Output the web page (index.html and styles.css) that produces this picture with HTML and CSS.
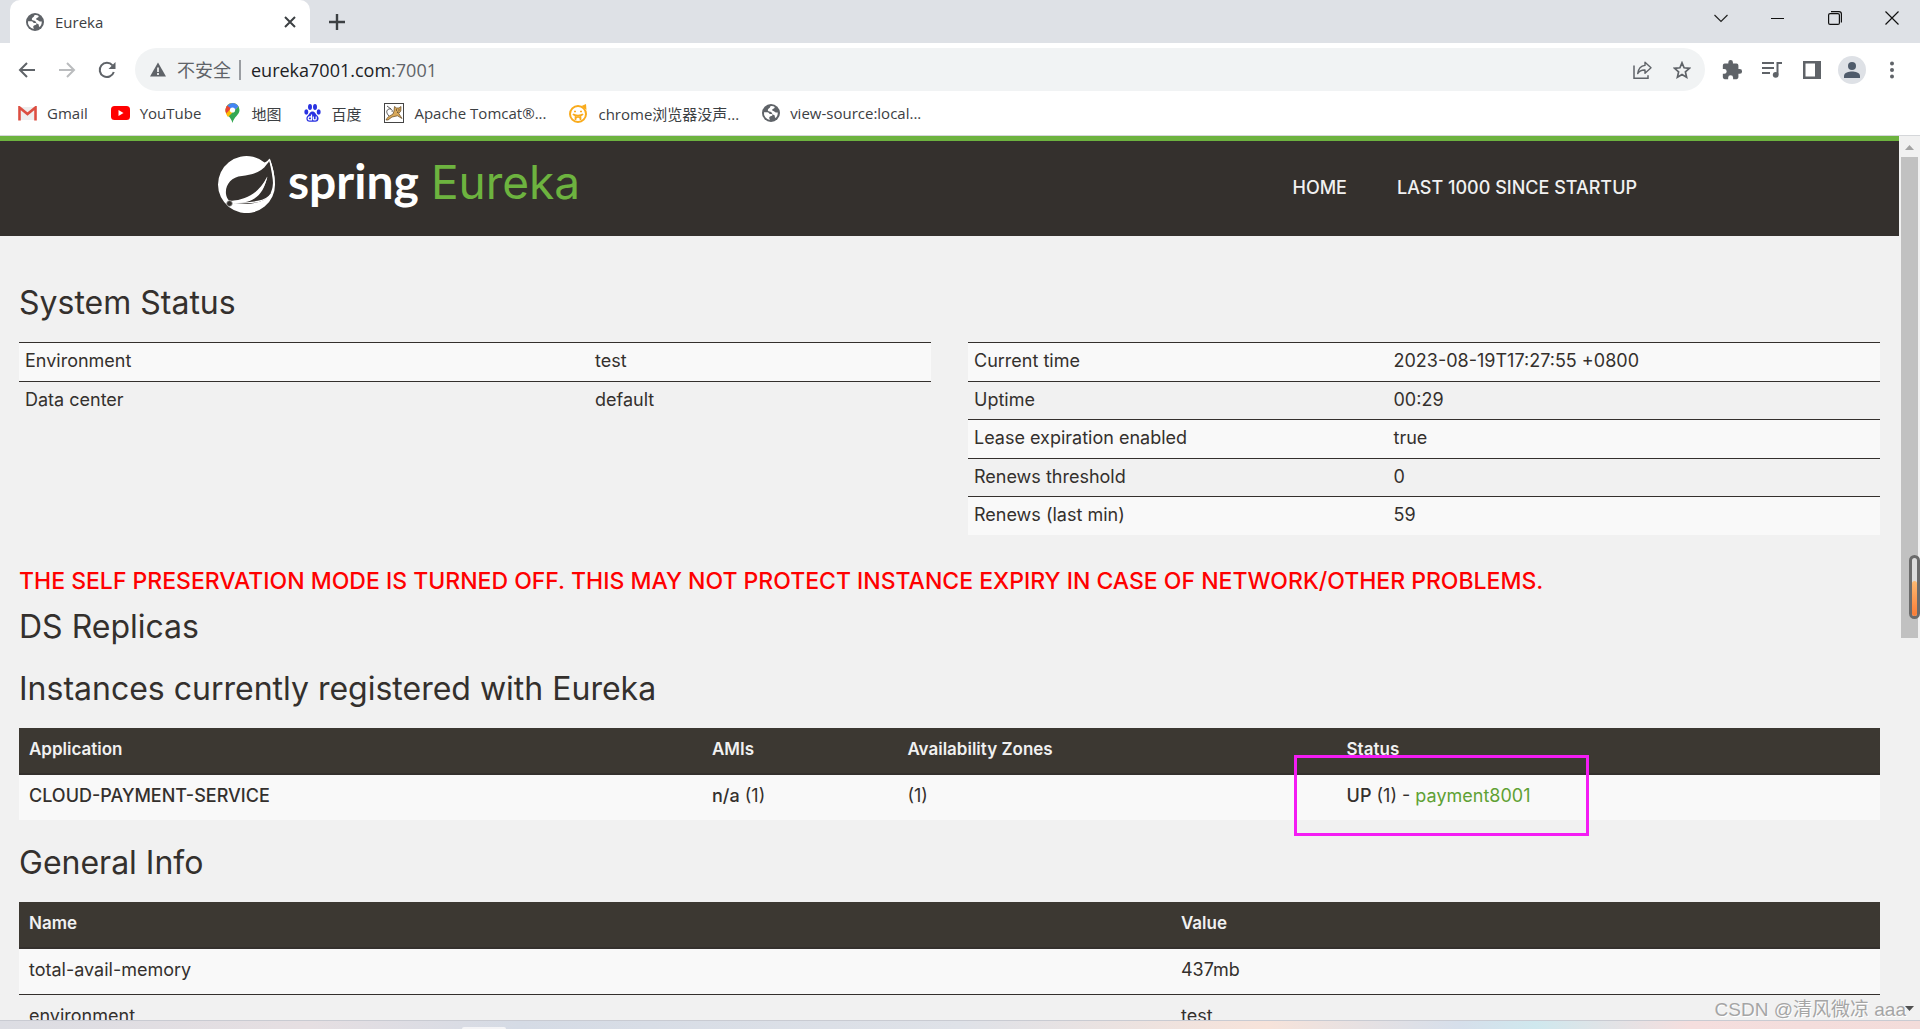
FILE: index.html
```html
<!DOCTYPE html>
<html lang="zh-CN">
<head>
<meta charset="utf-8">
<meta name="viewport" content="width=device-width, initial-scale=1">
<title>Eureka</title>
<link rel="stylesheet" href="styles.css">
</head>
<body>
<svg class="defs" aria-hidden="true">
  <symbol id="globe" viewBox="0 0 18 18">
    <circle cx="9" cy="9" r="9" fill="#5f6368"/>
    <path d="M2 8.200h3.600c1.200 0 1.300 1.700 2.600 1.700h1.400c1 0 1.200 1 .6 1.700-.8.900-2.700.8-2.900 1.700-.2.800.2 1.500.5 2.600A6.800 6.800 0 0 1 2 8.200zM8.400 2.200c1.900-.3 3.300.1 4.300.8-.1 1.500-1.200 1.500-2.200 2.300-.7.600-.2 1.600.7 1.600 1.200.1 1.600 1.500 2.800 1.500h1.800c.1 2.600-1 4.500-2.500 5.700-.7-1-.2-1.800-.8-2.800-.7-1-1.500-.5-2.100-1.400-.5-.9-1-1.700-2-2.100C7.100 7.200 5.700 7 5.800 5.900 5.900 4.600 8.300 4 8.400 2.200z" fill="#fff"/>
  </symbol>
</svg>

<header class="browser">
  <div class="tabstrip">
    <div class="tab">
      <svg class="favicon" width="18" height="18"><use href="#globe"/></svg>
      <span class="tab-title">Eureka</span>
      <button class="tab-close" aria-label="Close tab"><svg width="12" height="12" viewBox="0 0 12 12"><path d="M1 1l10 10M11 1L1 11" stroke="#3c4043" stroke-width="2"/></svg></button>
    </div>
    <button class="tab-new" aria-label="New tab"><svg width="16" height="16" viewBox="0 0 16 16"><path d="M8 0v16M0 8h16" stroke="#3c4043" stroke-width="2.400"/></svg></button>
    <div class="window-controls">
      <button aria-label="Search tabs"><svg width="14" height="9" viewBox="0 0 14 9"><path d="M.5 1L7 7.500 13.500 1" fill="none" stroke="#222" stroke-width="1.200"/></svg></button>
      <button aria-label="Minimize"><svg width="13" height="13" viewBox="0 0 13 13"><path d="M0 6.500h13" stroke="#111"/></svg></button>
      <button aria-label="Restore"><svg width="14" height="14" viewBox="0 0 14 14"><rect x=".6" y="2.600" width="10.800" height="10.800" rx="1.500" fill="none" stroke="#111" stroke-width="1.200"/><path d="M3 .6h8a2.400 2.400 0 0 1 2.400 2.400v8.500" fill="none" stroke="#111" stroke-width="1.200"/></svg></button>
      <button aria-label="Close"><svg width="14" height="14" viewBox="0 0 14 14"><path d="M.5.5l13 13M13.500.5l-13 13" stroke="#111" stroke-width="1.200"/></svg></button>
    </div>
  </div>

  <div class="toolbar">
    <button class="tool" aria-label="Back"><svg width="18" height="18" viewBox="0 0 18 18"><path d="M17 9H2M9 2L2 9l7 7" fill="none" stroke="#5f6368" stroke-width="2"/></svg></button>
    <button class="tool" aria-label="Forward"><svg width="18" height="18" viewBox="0 0 18 18"><path d="M1 9h15M9 2l7 7-7 7" fill="none" stroke="#babcbe" stroke-width="2"/></svg></button>
    <button class="tool" aria-label="Reload"><svg width="18" height="18" viewBox="0 0 18 18"><path d="M15.800 11A7.200 7.200 0 1 1 14.500 4.300" fill="none" stroke="#5f6368" stroke-width="2"/><path d="M17.500 1v7h-7z" fill="#5f6368"/></svg></button>
    <form class="omnibox">
      <svg class="warn" width="16" height="15" viewBox="0 0 16 15"><path d="M8 .5L16 14.500H0z" fill="#5f6368"/><path d="M8 5.500v4.500M8 11v2" stroke="#fff" stroke-width="1.600"/></svg>
      <span class="insecure">不安全</span>
      <input class="url" type="text" aria-label="Address" value="eureka7001.com"><span class="port">:7001</span>
      <button class="tool first-end" type="button" aria-label="Share"><svg width="19" height="18" viewBox="0 0 19 18"><path d="M1 4.500v12.700h14v-3" fill="none" stroke="#5f6368" stroke-width="1.500"/><path d="M12 1.200l6 5.600-6 5.400V9c-3.500-.2-5.600 1-7.300 3.600C5.300 8 8 4.800 12 4.400z" fill="none" stroke="#5f6368" stroke-width="1.400" stroke-linejoin="round"/></svg></button>
      <button class="tool" type="button" aria-label="Bookmark"><svg width="18" height="18" viewBox="0 0 18 18"><path d="M9 1.800l2.100 5 5.400.5-4.100 3.600 1.200 5.300L9 13.400l-4.600 2.800 1.200-5.300-4.100-3.600 5.400-.5z" fill="none" stroke="#5f6368" stroke-width="1.700"/></svg></button>
    </form>
    <div class="extensions">
      <button class="tool" aria-label="Extensions"><svg width="22" height="22" viewBox="0 0 24 24"><path fill="#5f6368" d="M20.500 11H19V7a2 2 0 0 0-2-2h-4V3.500a2.500 2.500 0 0 0-5 0V5H4a2 2 0 0 0-2 2v3.800h1.500a2.700 2.700 0 0 1 0 5.400H2V20a2 2 0 0 0 2 2h3.800v-1.500a2.700 2.700 0 0 1 5.400 0V22H17a2 2 0 0 0 2-2v-4h1.500a2.500 2.500 0 0 0 0-5z"/></svg></button>
      <button class="tool" aria-label="Media"><svg width="20" height="16" viewBox="0 0 20 16"><path d="M0 1h12M0 6h12M0 11h8" stroke="#5f6368" stroke-width="2"/><path d="M15.500 12.500V1H20" fill="none" stroke="#5f6368" stroke-width="2"/><circle cx="13.700" cy="12.800" r="2.900" fill="#5f6368"/></svg></button>
      <button class="tool" aria-label="Side panel"><svg width="18" height="18" viewBox="0 0 18 18"><path fill="#5f6368" fill-rule="evenodd" d="M0 0h18v18H0zM2.500 2.500v13H12v-13z"/></svg></button>
      <button class="tool" aria-label="Profile"><svg width="28" height="28" viewBox="0 0 28 28"><circle cx="14" cy="14" r="14" fill="#dee1e6"/><circle cx="14" cy="10" r="4" fill="#4f5b6b"/><path d="M6 22v-2.200C6 16.800 11 15.500 14 15.500s8 1.300 8 4.300V22z" fill="#4f5b6b"/></svg></button>
      <button class="tool" aria-label="Menu"><svg width="4" height="18" viewBox="0 0 4 18"><g fill="#5f6368"><circle cx="2" cy="2.500" r="2"/><circle cx="2" cy="9" r="2"/><circle cx="2" cy="15.500" r="2"/></g></svg></button>
    </div>
  </div>

  <nav class="bookmarks" aria-label="Bookmarks">
    <a href="#"><svg width="19" height="15" viewBox="0 0 19 15"><path d="M3 1h13v13H3z" fill="#eee"/><path d="M1.500 14.500V1.500l8 6.500 8-6.500v13" fill="none" stroke="#dc4e41" stroke-width="2.600"/></svg>Gmail</a>
    <a href="#"><svg width="19" height="14" viewBox="0 0 19 14"><rect width="19" height="14" rx="3.500" fill="#f00"/><path d="M7.500 4v6l5-3z" fill="#fff"/></svg>YouTube</a>
    <a href="#"><svg width="17" height="20" viewBox="0 0 17 20"><path d="M8.500 0a7 7 0 0 1 7 7c0 5-5.500 6.500-7 13-1.500-6.500-7-8-7-13a7 7 0 0 1 7-7z" fill="#34a853"/><path d="M8.500 0c2.500 0 4.800 1.300 6 3.500L4 14C2.500 12 1.500 10 1.500 7a7 7 0 0 1 7-7z" fill="#fbbc04"/><path d="M8.500 0c2.500 0 4.800 1.300 6 3.500L8.500 9.500 3.200 2.500A7 7 0 0 1 8.500 0z" fill="#4285f4"/><path d="M3.200 2.500L7 5.500 2.200 10.500C1 8 1.200 5 3.200 2.500z" fill="#ea4335"/><circle cx="8.500" cy="7" r="2.600" fill="#fff"/></svg>地图</a>
    <a href="#"><svg width="17" height="18" viewBox="0 0 17 18"><g fill="#2932e1"><ellipse cx="2.300" cy="8" rx="2" ry="2.700"/><ellipse cx="6" cy="3" rx="2" ry="2.900"/><ellipse cx="11" cy="3" rx="2" ry="2.900"/><ellipse cx="14.700" cy="8" rx="2" ry="2.700"/><path d="M8.500 7.500c2.500 0 3 2.500 4.700 4 2.600 2.400 1.300 6.300-1.700 6.300H5.500c-3 0-4.300-3.900-1.700-6.300 1.700-1.500 2.200-4 4.700-4z"/></g><path d="M7.500 10.500v5.400H5.700a1.500 1.500 0 0 1 0-3h1.800M9.300 12.500v2.400c0 1.300 2.900 1.300 2.900 0v-2.400" fill="none" stroke="#fff" stroke-width="1.200"/></svg>百度</a>
    <a href="#"><svg width="20" height="20" viewBox="0 0 20 20"><rect x=".5" y=".5" width="19" height="19" fill="#fff" stroke="#444"/><path d="M2 17c2-4 4-4 7-6l1-3 .5-4.500 2 1.500h2.500L17 3.500l-.2 4.500-2 2.500 3.200 5-4.500-2.700L8 14l-4 3z" fill="#d9a95a" stroke="#60451f" stroke-width=".7"/><path d="M5 13C2 10 2 7 5 6c2-.5 4 1 3 3M3 3l4 3" fill="none" stroke="#333" stroke-width=".8"/><path d="M12 7h1M14.500 7h1M13.200 9.200h1.200" stroke="#222"/></svg>Apache Tomcat®...</a>
    <a href="#"><svg width="19" height="19" viewBox="0 0 19 19"><path d="M12.500 2L17 0l.5 6z" fill="#f9ab1c"/><circle cx="9" cy="10" r="8" fill="none" stroke="#f9ab1c" stroke-width="2"/><path d="M5 7.500h2M11 7.500h2M4 10c1.500 2 8.500 2 10 0M6.500 11.500V16M11.500 11.500V16M6.500 14.500c1-2 4-2 5 0" fill="none" stroke="#f9ab1c" stroke-width="1.700"/></svg>chrome浏览器没声...</a>
    <a href="#"><svg width="18" height="18"><use href="#globe"/></svg>view-source:local...</a>
  </nav>
</header>

<div class="viewport">
  <div class="page">
    <header class="site-header">
      <div class="container">
        <a class="brand" href="#" aria-label="Spring Eureka">
          <svg width="58" height="58" viewBox="0 0 58 58"><path d="M46.500 7.500A28.500 28.500 0 1 0 57 29c0-8-2-17-5.500-25.500-1 1.500-2.500 3-5 4z" fill="#fff"/><path d="M49 9C43 18 33 20 24 21 13 22 7 30 8 39c.4 3 1.500 5 3 6.500 13 2 31-5 38-24-3 18-13 27-33 26.500 15 3 32-1 37-9 4-7 1.500-18-1.700-33.500-.5 1.500-1.300 2.500-2.300 3.500z" fill="#34302d"/><path d="M13 46.200c16-2 27-7 36.500-24.700C46 37 36 46.500 15 47.500z" fill="#fff"/><path d="M51.500 4.500C56 17 57.500 30 53 39c-5 8-18 9-36 9" fill="none" stroke="#fff" stroke-width="1.300"/><circle cx="11.500" cy="48.500" r="2.800" fill="#34302d" stroke="#aaa" stroke-width=".7"/></svg>
          <span class="wordmark"><span class="brand-spring">spring</span><span class="brand-eureka">Eureka</span></span>
        </a>
        <nav class="site-nav" aria-label="Main">
          <a href="#">HOME</a>
          <a href="#">LAST 1000 SINCE STARTUP</a>
        </nav>
      </div>
    </header>

    <main class="content">
      <h1>System Status</h1>
      <div class="status-grid">
        <table class="status">
          <colgroup><col class="col-env"><col></colgroup>
          <tbody>
            <tr><td>Environment</td><td>test</td></tr>
            <tr><td>Data center</td><td>default</td></tr>
          </tbody>
        </table>
        <table class="status">
          <colgroup><col class="col-metric"><col></colgroup>
          <tbody>
            <tr><td>Current time</td><td>2023-08-19T17:27:55 +0800</td></tr>
            <tr><td>Uptime</td><td>00:29</td></tr>
            <tr><td>Lease expiration enabled</td><td>true</td></tr>
            <tr><td>Renews threshold</td><td>0</td></tr>
            <tr><td>Renews (last min)</td><td>59</td></tr>
          </tbody>
        </table>
      </div>

      <h4 class="alert">THE SELF PRESERVATION MODE IS TURNED OFF. THIS MAY NOT PROTECT INSTANCE EXPIRY IN CASE OF NETWORK/OTHER PROBLEMS.</h4>

      <h1>DS Replicas</h1>
      <h1>Instances currently registered with Eureka</h1>
      <div class="instances">
        <table class="data">
          <colgroup><col class="col-app"><col class="col-ami"><col class="col-zone"><col></colgroup>
          <thead><tr><th>Application</th><th>AMIs</th><th>Availability Zones</th><th>Status</th></tr></thead>
          <tbody><tr><td><b>CLOUD-PAYMENT-SERVICE</b></td><td><b>n/a</b> (1)</td><td>(1)</td><td><b>UP</b> (1) - <a href="#">payment8001</a></td></tr></tbody>
        </table>
        <div class="highlight"></div>
      </div>

      <h1>General Info</h1>
      <table class="data">
        <colgroup><col class="col-name"><col></colgroup>
        <thead><tr><th>Name</th><th>Value</th></tr></thead>
        <tbody>
          <tr><td>total-avail-memory</td><td>437mb</td></tr>
          <tr><td>environment</td><td>test</td></tr>
        </tbody>
      </table>
    </main>
  </div>
  <div class="scrollbar">
    <svg width="9" height="5" viewBox="0 0 9 5"><path d="M4.500 0L9 5H0z" fill="#a3a3a3"/></svg>
    <div class="thumb"></div>
    <svg class="arrow-down" width="9" height="5" viewBox="0 0 9 5"><path d="M0 0h9L4.500 5z" fill="#505050"/></svg>
  </div>
  <div class="gauge"><div class="gauge-fill"></div></div>
  <div class="watermark">CSDN @清风微凉 aaa</div>
</div>
<div class="desktop-edge"><div class="taskbar-item"></div></div>
</body>
</html>
```
FILE: styles.css
```css
* { box-sizing: border-box; }
body {
  margin: 0;
  height: 100vh;
  display: flex;
  flex-direction: column;
  overflow: hidden;
  background: #fff;
  font-family: Inter, "Noto Sans CJK SC", sans-serif;
}
button { border: 0; padding: 0; background: none; display: grid; place-items: center; }
a { text-decoration: none; }
.defs { position: absolute; width: 0; height: 0; }

/* Browser frame */
.browser {
  flex: none;
  border-bottom: 1px solid #d5d7da;
  font-family: "Open Sans", "Noto Sans CJK SC", sans-serif;
  color: #3c4043;
}
.tabstrip { display: flex; height: 43px; padding-left: 10px; background: #dee1e6; }
.tab {
  display: flex;
  align-items: center;
  width: 300px;
  padding: 0 14px 0 16px;
  background: #fff;
  border-radius: 10px 10px 0 0;
  font-size: 15px;
}
.tab-title { margin-left: 11px; }
.tab-close { margin-left: auto; }
.tab-new { width: 54px; }
.window-controls { display: flex; height: 36px; margin-left: auto; }
.window-controls button { width: 57px; }

.toolbar { display: flex; align-items: center; height: 53px; padding: 0 8px 0 7px; }
.tool { flex: none; width: 40px; height: 40px; }
.omnibox {
  display: flex;
  flex: 1;
  align-items: center;
  height: 43px;
  margin: 0 7px 0 8px;
  padding: 0 3px 0 15px;
  border-radius: 22px;
  background: #f1f3f4;
  font-size: 18px;
}
.insecure {
  margin-left: 11px;
  padding-right: 8px;
  border-right: 2px solid #9a9da1;
  line-height: 20px;
  color: #5f6368;
}
.url {
  field-sizing: content;
  margin-left: 10px;
  padding: 0;
  border: 0;
  background: none;
  font: inherit;
  color: #202124;
}
.port { color: #5f6368; }
.first-end { margin-left: auto; }
.extensions { display: flex; }

.bookmarks {
  display: flex;
  align-items: center;
  gap: 23px;
  height: 39px;
  padding: 0 18px 5px;
  font-size: 15px;
}
.bookmarks a { display: flex; align-items: center; gap: 10px; color: #3c4043; white-space: nowrap; }

/* Page area */
.viewport { position: relative; display: flex; flex: 1; min-height: 0; background: #f1f1f1; }
.page { flex: 1; min-width: 0; overflow: hidden; color: #34302d; font-size: 18px; }
.site-header { height: 100px; border-top: 5px solid #6db33f; background: #34302d; }
.container {
  display: flex;
  align-items: center;
  justify-content: space-between;
  max-width: 1463px;
  height: 86px;
  margin: 0 auto;
  padding-right: 44px;
}
.brand { display: flex; align-items: center; }
.wordmark { display: flex; align-items: baseline; gap: 12px; padding: 0 0 6px 12px; line-height: 56px; }
.brand-spring { font-family: Lato, sans-serif; font-size: 48px; font-weight: 700; color: #fff; }
.brand-eureka { font-size: 46px; color: #6db33f; }
.site-nav { display: flex; gap: 50px; padding-top: 6px; }
.site-nav a { color: #f1f1f1; font-weight: 500; }

.content { padding: 24px 19px; }
h1 { margin: 27px 0 23px; font-size: 32px; font-weight: 400; line-height: 32px; }
.alert { margin: 34px 0 18px; font-size: 23px; font-weight: 500; line-height: 24px; color: #f00; }
.alert + h1 { margin: 18px 0 30px; }

table { width: 100%; border-collapse: separate; border-spacing: 0; table-layout: fixed; line-height: 25px; }
th, td { text-align: left; }
tbody tr:nth-child(odd) { background: #f9f9f9; }
b { font-weight: 500; }

.status-grid { display: grid; grid-template-columns: 1fr 1fr; gap: 37px; align-items: start; }
.status td { padding: 5px 6px 7px; border-top: 1px solid #34302d; }
.status tr:nth-child(odd) td { padding-bottom: 8px; }
.col-env { width: 62.5%; }
.col-metric { width: 46%; }

.data th { padding: 9px 10px 11px; }
.data td { padding: 8px 10px 12px; }
.data th { border-bottom: 2px solid #34302d; background: #3c3832; color: #f1f1f1; font-size: 17px; font-weight: 600; }
.data tr + tr td { border-top: 1px solid #34302d; }
.data a { color: #5fa134; }
.col-app { width: 36.7%; }
.col-ami { width: 10.5%; }
.col-zone { width: 23.6%; }
.col-name { width: 61.9%; }

.instances { position: relative; }
.highlight { position: absolute; top: 27px; left: 68.5%; width: 295px; height: 81px; border: 3px solid #f41cf4; }

.scrollbar {
  display: flex;
  flex: none;
  flex-direction: column;
  align-items: center;
  width: 21px;
  padding: 9px 0;
  background: #f1f1f1;
}
.thumb { width: 17px; height: 55.5%; margin-top: 7px; background: #c1c1c1; }
.arrow-down { margin-top: auto; }
.gauge {
  position: absolute;
  top: 419px;
  right: 0;
  display: flex;
  align-items: flex-end;
  width: 11px;
  height: 64px;
  border: 3px solid #6b6b6b;
  border-radius: 6px;
  background: #ddd;
}
.gauge-fill { width: 5px; height: 60%; border-radius: 3px; background: linear-gradient(#fdba72, #f97b35); }
.watermark {
  position: absolute;
  right: 14px;
  bottom: -2px;
  font-family: "Liberation Sans", "Noto Sans CJK SC", sans-serif;
  font-size: 19px;
  line-height: 24px;
  color: #a5a5a5;
  text-shadow: 1px 1px 0 #fff;
}

.desktop-edge {
  flex: none;
  height: 9px;
  padding-left: 462px;
  padding-top: 6px;
  border-top: 1px solid #c9cbd2;
  background: linear-gradient(90deg, #dcdde3, #e6dfe2 16%, #d5dbe5 27%, #dfe2e8 50%, #f7e3da 66%, #d6dfeb 76%, #cfe8ee 80%, #f5dede 88%, #f3dcda);
}
.taskbar-item { width: 44px; height: 2px; border-radius: 2px 2px 0 0; background: #f4f4f6; }
```
